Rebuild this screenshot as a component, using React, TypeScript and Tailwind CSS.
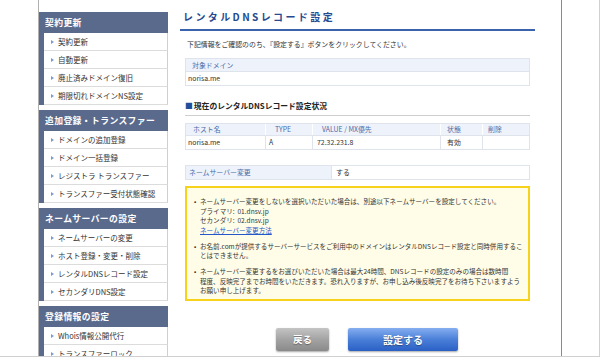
import React from "react";

const FONT = { fontFamily: '"Noto Sans CJK JP", "Noto Sans", sans-serif' };

const menu = [
  { title: "契約更新", items: ["契約更新", "自動更新", "廃止済みドメイン復旧", "期限切れドメインNS設定"] },
  { title: "追加登録・トランスファー", items: ["ドメインの追加登録", "ドメイン一括登録", "レジストラ トランスファー", "トランスファー受付状態確認"] },
  { title: "ネームサーバーの設定", items: ["ネームサーバーの変更", "ホスト登録・変更・削除", "レンタルDNSレコード設定", "セカンダリDNS設定"] },
  { title: "登録情報の設定", items: ["Whois情報公開代行", "トランスファーロック"] },
];

function Sidebar() {
  return (
    <div className="w-[129px] shrink-0 pt-[12px] flex flex-col gap-[5px]">
      {menu.map((sec) => (
        <div key={sec.title}>
          <div className="h-[21px] bg-[#5a6a8c] pl-[6px] flex items-center text-white font-bold text-[8.8px] tracking-[0.4px]">
            {sec.title}
          </div>
          <div className="bg-[#5a6a8c] pl-[5px]">
            {sec.items.map((it) => (
              <div
                key={it}
                className="h-[18px] bg-white border-b border-[#dcdcdc] border-r border-r-[#cfcfcf] flex items-center pl-[7px] gap-[4px] text-[7.5px] text-[#333]"
              >
                <span className="w-0 h-0 border-y-[2.5px] border-y-transparent border-l-[3.5px] border-l-[#7b9bcb]" />
                <span className="whitespace-nowrap">{it}</span>
              </div>
            ))}
          </div>
        </div>
      ))}
    </div>
  );
}

function Bullet({ children }: { children: React.ReactNode }) {
  return (
    <li className="flex mb-[6.5px] last:mb-0">
      <span className="w-[7px] shrink-0 pl-[1px]">•</span>
      <div className="whitespace-nowrap">{children}</div>
    </li>
  );
}

function Main() {
  return (
    <div className="flex-1 pl-[12px]">
      <div className="w-[355px]">
        <div className="pt-[11px] pb-[6px] pl-[3px] border-b-2 border-[#3b63ad] text-[10px] leading-[12px] font-bold text-[#26498f] tracking-[2.4px]">
          レンタルDNSレコード設定
        </div>
        <div className="px-[5px] text-[6.9px] text-[#333]">
          <p className="mt-[8px] leading-[10px] pl-[2px]">下記情報をご確認ののち、『設定する』ボタンをクリックしてください。</p>

          <div className="mt-[9px] border border-[#dfe4ec]">
            <div className="h-[13px] bg-[#eef3fb] border-b border-[#dfe4ec] flex items-center pl-[6px] text-[#4a6aa8]">対象ドメイン</div>
            <div className="h-[13px] flex items-center pl-[2px]">norisa.me</div>
          </div>

          <div className="mt-[15px] pb-[4px] border-b border-[#cfcfcf] text-[7.8px] leading-[10px] font-bold text-[#222] flex items-center">
            <span className="text-[#1f4f9c] mr-[1px]">■</span>現在のレンタルDNSレコード設定状況
          </div>

          <div className="mt-[7px] border border-[#dfe4ec]">
            <div className="h-[12px] bg-[#eef3fb] border-b border-[#dfe4ec] flex text-[#4a6aa8]">
              <div className="w-[80px] border-r border-white flex items-center pl-[7px]">ホスト名</div>
              <div className="w-[47px] border-r border-white flex items-center pl-[9px]">TYPE</div>
              <div className="w-[128px] border-r border-white flex items-center pl-[9px]">VALUE / MX優先</div>
              <div className="w-[42px] border-r border-white flex items-center pl-[6px]">状態</div>
              <div className="flex-1 flex items-center pl-[5px]">削除</div>
            </div>
            <div className="h-[13px] flex">
              <div className="w-[80px] border-r border-[#dfe4ec] flex items-center pl-[2px]">norisa.me</div>
              <div className="w-[47px] border-r border-[#dfe4ec] flex items-center pl-[3px]">A</div>
              <div className="w-[128px] border-r border-[#dfe4ec] flex items-center pl-[4px]">72.32.231.8</div>
              <div className="w-[42px] border-r border-[#dfe4ec] flex items-center pl-[6px]">有効</div>
              <div className="flex-1" />
            </div>
          </div>

          <div className="mt-[15px] h-[15px] border border-[#dfe4ec] flex">
            <div className="w-[146px] bg-[#eef3fb] border-r border-[#dfe4ec] flex items-center pl-[3px] text-[#4a6aa8]">ネームサーバー変更</div>
            <div className="flex-1 flex items-center pl-[4px]">する</div>
          </div>

          <div className="mt-[6px] h-[115px] border-2 border-[#f6d21a] bg-[#fffde8] pt-[9px] pl-[6px] pr-[2px] leading-[9.5px] text-[6.55px] text-[#333]">
            <ul>
              <Bullet>
                <div>ネームサーバー変更をしないを選択いただいた場合は、別途以下ネームサーバーを設定してください。</div>
                <div>プライマリ:&nbsp;&nbsp;01.dnsv.jp</div>
                <div>セカンダリ:&nbsp;&nbsp;02.dnsv.jp</div>
                <div className="text-[#2458c8] underline">ネームサーバー変更方法</div>
              </Bullet>
              <Bullet>
                <div>お名前.comが提供するサーバーサービスをご利用中のドメインはレンタルDNSレコード設定と同時併用するこ</div>
                <div>とはできません。</div>
              </Bullet>
              <Bullet>
                <div>ネームサーバー変更するをお選びいただいた場合は最大24時間、DNSレコードの設定のみの場合は数時間</div>
                <div>程度、反映完了までお時間をいただきます。恐れ入りますが、お申し込み後反映完了をお待ち下さいますよう</div>
                <div>お願い申し上げます。</div>
              </Bullet>
            </ul>
          </div>

          <div className="mt-[27px] ml-[91px] flex gap-[19px]">
            <button className="w-[53px] h-[23px] rounded-[2px] bg-gradient-to-b from-[#c4c4c4] via-[#a3a3a3] to-[#8a8a8a] text-white font-bold text-[9.5px] shadow-[0_1px_2px_rgba(0,0,0,0.35)] [text-shadow:0_1px_1px_rgba(0,0,0,0.35)]">
              戻る
            </button>
            <button className="w-[110px] h-[23px] rounded-[2px] bg-gradient-to-b from-[#86aef0] via-[#4a7fd8] to-[#2a60c4] text-white font-bold text-[10px] shadow-[0_1px_2px_rgba(0,0,0,0.35)] [text-shadow:0_1px_1px_rgba(0,0,0,0.35)]">
              設定する
            </button>
          </div>
        </div>
      </div>
    </div>
  );
}

export default function App() {
  return (
    <div style={FONT} className="w-[600px] h-[357px] bg-white flex overflow-hidden border-b border-[#d0d0d0]">
      <div className="w-[38px] shrink-0" />
      <div className="w-[524px] shrink-0 border-l border-[#b0b0b0] border-r border-r-[#8a8a8a] flex">
        <Sidebar />
        <Main />
      </div>
      <div className="flex-1 border-r border-[#d0d0d0]" />
    </div>
  );
}
